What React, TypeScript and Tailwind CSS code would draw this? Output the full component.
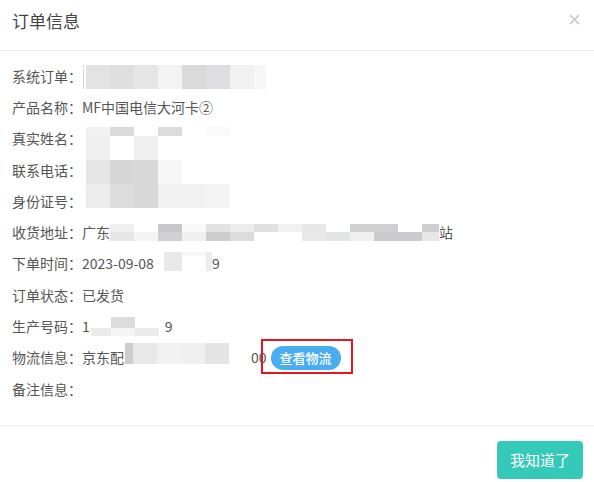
import React from "react";

type Col = { w: number; segs: [number, string][] };

// redaction blocks: each column is stacked segments of [height, colour]
function Mosaic({ cols, className = "" }: { cols: Col[]; className?: string }) {
  return (
    <span className={`inline-flex items-start shrink-0 ${className}`}>
      {cols.map((c, i) => (
        <span key={i} className="flex flex-col" style={{ width: c.w }}>
          {c.segs.map(([h, bg], j) => (
            <span key={j} className="block" style={{ height: h, background: bg }} />
          ))}
        </span>
      ))}
    </span>
  );
}

const full = (w: number, h: number, bg: string): Col => ({ w, segs: [[h, bg]] });
const two = (w: number, t: string, b: string, ht = 8, hb = 9): Col => ({
  w,
  segs: [
    [ht, t],
    [hb, b],
  ],
});

const orderCols: Col[] = [
  full(1, 24, "#d4d4d4"),
  full(2, 24, "#ffffff"),
  full(24, 24, "#e3e3e4"),
  full(24, 24, "#dfdfe0"),
  full(24, 24, "#e6e6e7"),
  full(24, 24, "#f3f3f3"),
  full(24, 24, "#dadadb"),
  full(24, 24, "#dedee0"),
  full(24, 24, "#f1f1f1"),
  full(12, 24, "#f6f6f6"),
];

const addrTop = ["#f0f0f0", "#ffffff", "#c8c8ca", "#f8f8f8", "#e2e2e3", "#ececec", "#e0e0e0", "#f1f1f1", "#e7e7e8", "#ffffff", "#d0d0d1", "#d0d0d1", "#ffffff", "#cfcfd0"];
const addrBot = ["#e6e6e6", "#f4f4f4", "#d0d0d1", "#f0f0f0", "#cdcdce", "#dcdcdd", "#ffffff", "#ffffff", "#e8e8e9", "#e3e4e4", "#efefef", "#cbcbcd", "#cbcbcd", "#e7e7e7"];
const addrCols: Col[] = addrTop.map((t, i) => two(i === 13 ? 17 : 24, t, addrBot[i]));

const timeCols: Col[] = [
  full(18, 19, "#e9e9ea"),
  { w: 24, segs: [[4, "#f8f8f8"]] },
  full(6, 19, "#ececec"),
];

const codeCols: Col[] = [
  two(20, "#ffffff", "#ebebeb", 11, 8),
  two(24, "#dcdcdd", "#f5f5f5", 11, 8),
  two(24, "#ffffff", "#ebebeb", 11, 8),
];

const shipCols: Col[] = [
  full(8, 21, "#cdcdce"),
  full(24, 21, "#e8e8e8"),
  full(24, 21, "#f1f1f1"),
  full(24, 21, "#f0f0f0"),
  full(24, 21, "#e4e4e5"),
];

// the block that covers name / phone / id rows
const block: [number, string[]][] = [
  [9, ["#f2f2f2", "#dadadb", "#ffffff", "#dcdcdd", "#ffffff", "#fafafa"]],
  [24, ["#efefef", "#ffffff", "#f0f0f0", "#ffffff", "#ffffff", "#ffffff"]],
  [24, ["#e6e6e7", "#d6d6d7", "#d8d8d9", "#f7f7f7", "#ffffff", "#ffffff"]],
  [24, ["#ececec", "#dcdcdd", "#d8d8d9", "#f1f1f1", "#f1f1f1", "#f4f4f4"]],
];

function Row({ label, children }: { label: string; children?: React.ReactNode }) {
  return (
    <div className="flex h-[31.3px] items-center whitespace-nowrap">
      <span className="w-[70px] shrink-0">{label}：</span>
      <span className="flex items-center">{children}</span>
    </div>
  );
}

export default function App() {
  return (
    <div
      className="w-[594px] h-[482px] bg-white text-[#555] overflow-hidden"
      style={{ fontFamily: '"Noto Sans CJK SC", "Noto Sans", sans-serif' }}
    >
      <div className="flex h-[51px] items-start justify-between border-b border-[#ebebeb] pl-3 pr-[14px] pt-[9px]">
        <h1 className="text-[17px] leading-6 text-[#444]">订单信息</h1>
        <svg className="mt-[5px]" width="11" height="11" viewBox="0 0 11 11">
          <path d="M1 1L10 10M10 1L1 10" stroke="#c6c6c6" strokeWidth="1.6" />
        </svg>
      </div>

      <div className="relative border-b border-[#ebebeb] pl-3 pt-[9px] pb-[21px] text-sm">
        <Row label="系统订单">
          <Mosaic cols={orderCols} className="ml-px mt-[3px]" />
        </Row>
        <Row label="产品名称">MF中国电信大河卡②</Row>
        <Row label="真实姓名" />
        <Row label="联系电话" />
        <Row label="身份证号" />
        <Row label="收货地址">
          广东
          <Mosaic cols={addrCols} className="mt-px" />
          站
        </Row>
        <Row label="下单时间">
          2023-09-08
          <Mosaic cols={timeCols} className="ml-[10px] -mt-[3px]" />
          9
        </Row>
        <Row label="订单状态">已发货</Row>
        <Row label="生产号码">
          1
          <Mosaic cols={codeCols} className="ml-px" />
          <span className="ml-[6px]">9</span>
        </Row>
        <Row label="物流信息">
          京东配
          <Mosaic cols={shipCols} className="ml-px -mt-[7px]" />
          <span className="ml-[22px]">00</span>
          <span className="relative ml-1 mt-[2px]">
            <span className="flex h-6 w-[70px] items-center justify-center rounded-full bg-[#4aadf1] text-[13px] font-medium text-white">
              查看物流
            </span>
            <span className="absolute -left-[10px] -right-[12px] -top-[7px] -bottom-[4px] border-2 border-[#e5161f]" />
          </span>
        </Row>
        <Row label="备注信息" />

        <div className="absolute left-[86px] top-[76px] flex flex-col">
          {block.map(([h, colors], i) => (
            <div key={i} className="flex">
              {colors.map((c, j) => (
                <span key={j} className="w-6" style={{ height: h, background: c }} />
              ))}
            </div>
          ))}
        </div>
      </div>

      <div className="flex justify-end pt-[15px] pr-[11px]">
        <button className="h-[38px] w-[86px] rounded-sm bg-[#34c9b8] text-[15px] text-white">
          我知道了
        </button>
      </div>
    </div>
  );
}
